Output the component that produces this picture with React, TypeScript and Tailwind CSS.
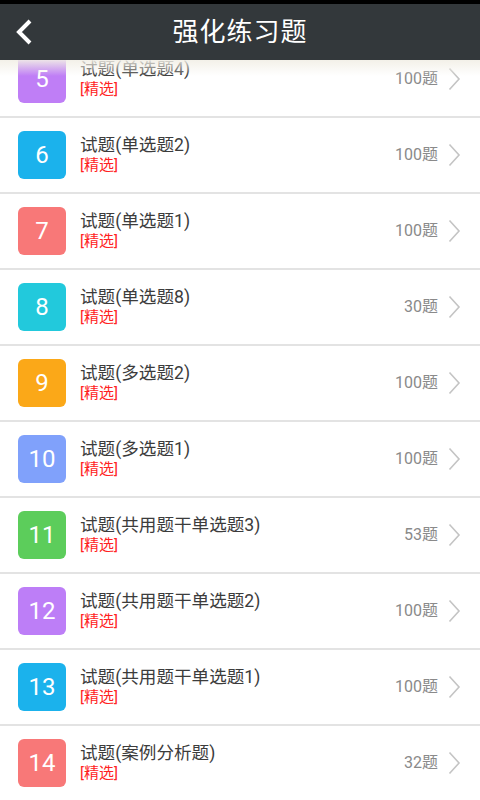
import React from 'react';

type Item = { n: number; title: string; count: number; color: string };

const items: Item[] = [
  { n: 5, title: '试题(单选题4)', count: 100, color: 'bg-[#bf7ef6]' },
  { n: 6, title: '试题(单选题2)', count: 100, color: 'bg-[#1bb2ec]' },
  { n: 7, title: '试题(单选题1)', count: 100, color: 'bg-[#f87878]' },
  { n: 8, title: '试题(单选题8)', count: 30, color: 'bg-[#22c9dc]' },
  { n: 9, title: '试题(多选题2)', count: 100, color: 'bg-[#fba818]' },
  { n: 10, title: '试题(多选题1)', count: 100, color: 'bg-[#80a1fb]' },
  { n: 11, title: '试题(共用题干单选题3)', count: 53, color: 'bg-[#5ccd5b]' },
  { n: 12, title: '试题(共用题干单选题2)', count: 100, color: 'bg-[#bd7ef7]' },
  { n: 13, title: '试题(共用题干单选题1)', count: 100, color: 'bg-[#1bb2ec]' },
  { n: 14, title: '试题(案例分析题)', count: 32, color: 'bg-[#f87878]' },
];

const cjk = "font-['Roboto','Noto_Sans_CJK_SC',sans-serif]";

function Row({ item }: { item: Item }) {
  return (
    <div className="flex h-[76px] items-center border-b-2 border-[#e3e3e3] bg-white pl-[18px] pr-[19px]">
      <div
        className={`flex h-12 w-12 shrink-0 items-center justify-center rounded-md ${item.color} font-['Roboto',sans-serif] text-[24px] text-white`}
      >
        {item.n}
      </div>
      <div className="ml-[14px] flex flex-1 flex-col">
        <span className="text-[17.6px] leading-[20px] text-[#3c3c3c]">{item.title}</span>
        <span className="text-[15px] leading-[20px] text-[#ff2222]">[精选]</span>
      </div>
      <span className="mr-[10px] text-[16px] text-[#8a8a8a]">{item.count}题</span>
      <svg width="13" height="24" viewBox="0 0 13 24" className="shrink-0">
        <path d="M1.5 1.5 L11 12 L1.5 22.5" fill="none" stroke="#c4c4c4" strokeWidth="1.6" />
      </svg>
    </div>
  );
}

export default function App() {
  return (
    <div className={`h-[800px] w-[480px] overflow-hidden bg-white ${cjk}`}>
      {/* status strip */}
      <div className="h-1 bg-black" />
      {/* header */}
      <header className="relative z-10 flex h-14 items-center justify-center bg-[#33383b]">
        <svg width="20" height="28" viewBox="0 0 20 28" className="absolute left-[14px] top-[14px]">
          <path d="M16 3 L5 14 L16 25" fill="none" stroke="#ffffff" strokeWidth="4" />
        </svg>
        <h1 className="text-[26px] font-normal tracking-[1px] text-white">强化练习题</h1>
        <div className="pointer-events-none absolute left-0 right-0 top-14 h-4 bg-gradient-to-b from-[#f2efe6] to-transparent opacity-90" />
      </header>
      {/* list */}
      <div className="h-[740px] overflow-hidden">
        <div className="-mt-[18px]">
          {items.map((it) => (
            <Row key={it.n} item={it} />
          ))}
        </div>
      </div>
    </div>
  );
}
